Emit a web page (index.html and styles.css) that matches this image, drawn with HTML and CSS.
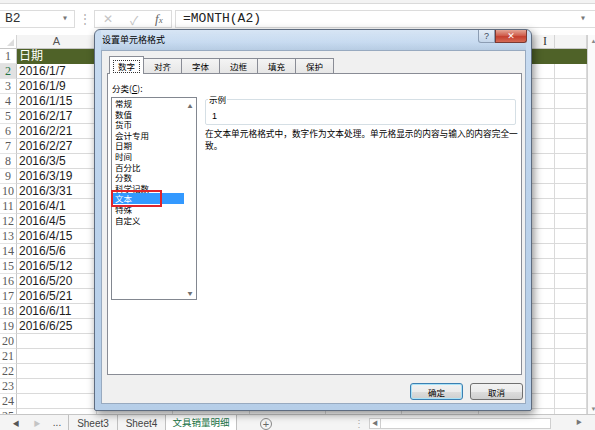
FILE: index.html
```html
<!DOCTYPE html>
<html lang="zh-CN">
<head>
    <meta charset="UTF-8">
    <meta name="viewport" content="width=device-width, initial-scale=1.0">
    <title>设置单元格格式</title>
    <link rel="stylesheet" href="styles.css">
</head>
<body>
    <div class="ribbon-edge"></div>

    <div class="formula-bar">
        <div class="name-box">B2<span class="caret">▾</span></div>
        <div class="grip">⋮</div>
        <div class="fx-box">
            <span class="fx-cancel">✕</span>
            <span class="fx-enter">✓</span>
            <span class="fx-label">f<small>x</small></span>
        </div>
        <div class="formula">=MONTH(A2)<span class="caret">▾</span></div>
    </div>

    <div class="sheet">
        <div class="grid">
            <div class="col-head">
                <span class="corner"><i></i></span><span>A</span><span></span><span></span><span></span><span></span><span></span><span class="beam">I</span><span></span>
            </div>
            <div class="row head"><span class="rh">1</span><span>日期</span><span></span><span></span><span></span><span></span><span></span><span></span><span></span></div>
            <div class="row current"><span class="rh">2</span><span>2016/1/7</span><span></span><span></span><span></span><span></span><span></span><span></span><span></span></div>
            <div class="row"><span class="rh">3</span><span>2016/1/9</span><span></span><span></span><span></span><span></span><span></span><span></span><span></span></div>
            <div class="row"><span class="rh">4</span><span>2016/1/15</span><span></span><span></span><span></span><span></span><span></span><span></span><span></span></div>
            <div class="row"><span class="rh">5</span><span>2016/2/17</span><span></span><span></span><span></span><span></span><span></span><span></span><span></span></div>
            <div class="row"><span class="rh">6</span><span>2016/2/21</span><span></span><span></span><span></span><span></span><span></span><span></span><span></span></div>
            <div class="row"><span class="rh">7</span><span>2016/2/27</span><span></span><span></span><span></span><span></span><span></span><span></span><span></span></div>
            <div class="row"><span class="rh">8</span><span>2016/3/5</span><span></span><span></span><span></span><span></span><span></span><span></span><span></span></div>
            <div class="row"><span class="rh">9</span><span>2016/3/19</span><span></span><span></span><span></span><span></span><span></span><span></span><span></span></div>
            <div class="row"><span class="rh">10</span><span>2016/3/31</span><span></span><span></span><span></span><span></span><span></span><span></span><span></span></div>
            <div class="row"><span class="rh">11</span><span>2016/4/1</span><span></span><span></span><span></span><span></span><span></span><span></span><span></span></div>
            <div class="row"><span class="rh">12</span><span>2016/4/5</span><span></span><span></span><span></span><span></span><span></span><span></span><span></span></div>
            <div class="row"><span class="rh">13</span><span>2016/4/15</span><span></span><span></span><span></span><span></span><span></span><span></span><span></span></div>
            <div class="row"><span class="rh">14</span><span>2016/5/6</span><span></span><span></span><span></span><span></span><span></span><span></span><span></span></div>
            <div class="row"><span class="rh">15</span><span>2016/5/12</span><span></span><span></span><span></span><span></span><span></span><span></span><span></span></div>
            <div class="row"><span class="rh">16</span><span>2016/5/20</span><span></span><span></span><span></span><span></span><span></span><span></span><span></span></div>
            <div class="row"><span class="rh">17</span><span>2016/5/21</span><span></span><span></span><span></span><span></span><span></span><span></span><span></span></div>
            <div class="row"><span class="rh">18</span><span>2016/6/11</span><span></span><span></span><span></span><span></span><span></span><span></span><span></span></div>
            <div class="row"><span class="rh">19</span><span>2016/6/25</span><span></span><span></span><span></span><span></span><span></span><span></span><span></span></div>
            <div class="row"><span class="rh">20</span><span></span><span></span><span></span><span></span><span></span><span></span><span></span><span></span></div>
            <div class="row"><span class="rh">21</span><span></span><span></span><span></span><span></span><span></span><span></span><span></span><span></span></div>
            <div class="row"><span class="rh">22</span><span></span><span></span><span></span><span></span><span></span><span></span><span></span><span></span></div>
            <div class="row"><span class="rh">23</span><span></span><span></span><span></span><span></span><span></span><span></span><span></span><span></span></div>
            <div class="row"><span class="rh">24</span><span></span><span></span><span></span><span></span><span></span><span></span><span></span><span></span></div>
            <div class="row"><span class="rh">25</span><span></span><span></span><span></span><span></span><span></span><span></span><span></span><span></span></div>
        </div>
        <div class="vscroll">
            <span class="arrow">▲</span>
            <span class="arrow">▼</span>
        </div>
    </div>

    <div class="tabbar">
        <span class="nav prev">◀</span>
        <span class="nav next">▶</span>
        <span class="nav more">...</span>
        <span class="sheet-tab">Sheet3</span>
        <span class="sheet-tab">Sheet4</span>
        <span class="sheet-tab active">文具销量明细</span>
        <span class="add-sheet">+</span>
        <span class="hgrip">⋮</span>
        <div class="hscroll">
            <span class="hbtn">◀</span>
            <span class="htrack"></span>
            <span class="hbtn right">▶</span>
        </div>
    </div>

    <!-- 设置单元格格式 dialog -->
    <div class="dialog">
        <div class="dlg-title">
            <span>设置单元格格式</span>
            <div class="dlg-controls">
                <span class="btn-help">?</span>
                <span class="btn-close">✕</span>
            </div>
        </div>
        <div class="dlg-client">
            <div class="tabs">
                <span class="tab active"><span class="focus">数字</span></span>
                <span class="tab">对齐</span>
                <span class="tab">字体</span>
                <span class="tab">边框</span>
                <span class="tab">填充</span>
                <span class="tab">保护</span>
            </div>
            <div class="panel">
                <div class="panel-left">
                    <div class="label">分类(<u>C</u>):</div>
                    <div class="listbox">
                        <ul>
                            <li>常规</li>
                            <li>数值</li>
                            <li>货币</li>
                            <li>会计专用</li>
                            <li>日期</li>
                            <li>时间</li>
                            <li>百分比</li>
                            <li>分数</li>
                            <li>科学记数</li>
                            <li class="selected">文本</li>
                            <li>特殊</li>
                            <li>自定义</li>
                        </ul>
                        <div class="list-scroll">
                            <span>▲</span>
                            <span>▼</span>
                        </div>
                        <div class="mark"></div>
                    </div>
                </div>
                <div class="panel-right">
                    <fieldset class="sample">
                        <legend>示例</legend>
                        <div class="sample-value">1</div>
                    </fieldset>
                    <p class="desc">在文本单元格格式中，数字作为文本处理。单元格显示的内容与输入的内容完全一致。</p>
                </div>
            </div>
            <div class="dlg-buttons">
                <button class="btn primary">确定</button>
                <button class="btn">取消</button>
            </div>
        </div>
    </div>
</body>
</html>
```

FILE: styles.css
```css
* {
    box-sizing: border-box;
}

body {
    margin: 0;
    width: 595px;
    height: 430px;
    overflow: hidden;
    position: relative;
    background-color: #fff;
    font-family: 'Liberation Sans', 'Noto Sans CJK SC', sans-serif;
    color: #1c1c1c;
}

/* top: ribbon edge + formula bar */
.ribbon-edge {
    height: 4px;
    background-color: #f3f3f3;
    border-bottom: 1px solid #dadada;
}

.formula-bar {
    height: 29px;
    display: flex;
    align-items: flex-start;
    padding-top: 6px;
}

.name-box {
    width: 75px;
    height: 18px;
    border: 1px solid #dcdcdc;
    border-left: none;
    padding-left: 5px;
    font-family: 'Liberation Mono', monospace;
    font-size: 13px;
    line-height: 16px;
    color: #333;
    position: relative;
}

.caret {
    position: absolute;
    right: 6px;
    top: 0;
    font-size: 10px;
    color: #777;
}

.grip {
    width: 19px;
    text-align: center;
    font-size: 12px;
    line-height: 18px;
    color: #b0b0b0;
}

.fx-box {
    width: 78px;
    height: 18px;
    border: 1px solid #dcdcdc;
    display: flex;
    justify-content: space-around;
    align-items: center;
    font-size: 12px;
}

.fx-cancel, .fx-enter {
    color: #c4c4c4;
}

.fx-label {
    font-family: 'Liberation Serif', serif;
    font-style: italic;
    color: #666;
    font-size: 13px;
}

.fx-label small {
    font-size: 9px;
}

.formula {
    flex: 1;
    margin-left: 3px;
    height: 18px;
    border: 1px solid #dcdcdc;
    border-right: none;
    padding-left: 7px;
    font-family: 'Liberation Mono', monospace;
    font-size: 13px;
    line-height: 16px;
    color: #222;
    position: relative;
}

.formula .caret {
    right: 9px;
}

/* sheet grid */
.sheet {
    display: flex;
    height: 379px;
    margin-top: 2px;
}

.grid {
    width: 587px;
    flex: 0 0 587px;
    overflow: hidden;
}

.col-head, .row {
    display: grid;
    grid-template-columns: 17px 80px repeat(6, 1fr) 32px;
}

.col-head {
    height: 14px;
    background-color: #f4f4f4;
}

.col-head span {
    border-right: 1px solid #d4d4d4;
    border-bottom: 1px solid #c6c6c6;
    text-align: center;
    font-size: 11px;
    line-height: 13px;
    color: #555;
}

.col-head .corner {
    position: relative;
    background-color: #fff;
}

.col-head .corner i {
    position: absolute;
    right: 2px;
    bottom: 2px;
    border-left: 7px solid transparent;
    border-bottom: 7px solid #dcdcdc;
}

.col-head .beam {
    text-align: right;
    padding-right: 7px;
    font-family: 'Liberation Serif', serif;
    font-size: 12px;
    color: #333;
}

.row {
    height: 15px;
}

.row span {
    border-right: 1px solid #dadada;
    border-bottom: 1px solid #dadada;
    padding-left: 2px;
    font-size: 12px;
    line-height: 14px;
    white-space: nowrap;
    overflow: hidden;
}

.row .rh {
    padding-left: 0;
    text-align: center;
    font-family: 'Liberation Serif', serif;
    color: #5a5a5a;
    background-color: #fff;
    border-right-color: #c6c6c6;
    border-bottom-color: #e4e4e4;
}

.row.current .rh {
    background-color: #e1e1e1;
    color: #217346;
}

.row.head span:not(.rh) {
    background-color: #4f6228;
    border-color: #4f6228;
    color: #fff;
}

.vscroll {
    width: 12px;
    flex: 0 0 12px;
    border-left: 1px solid #d0d0d0;
    background-color: #fafafa;
    display: flex;
    flex-direction: column;
    justify-content: space-between;
    align-items: center;
    padding: 3px 0 2px;
}

.vscroll .arrow {
    font-size: 6px;
    color: #888;
}

/* sheet tabs */
.tabbar {
    height: 18px;
    display: flex;
    align-items: stretch;
    background-color: #f4f4f4;
    border-top: 1px solid #c6c6c6;
    padding-left: 10px;
    font-size: 10px;
    line-height: 17px;
}

.nav {
    width: 12px;
    text-align: center;
    font-size: 7px;
    color: #555;
}

.nav.next {
    margin-left: 9px;
    color: #c4c4c4;
}

.nav.more {
    margin-left: 8px;
    margin-right: 5px;
    font-size: 10px;
    line-height: 15px;
    color: #444;
}

.sheet-tab {
    width: 49px;
    text-align: center;
    border-left: 1px solid #c0c0c0;
    color: #444;
}

.sheet-tab:nth-of-type(5) {
    width: 48px;
}

.sheet-tab.active {
    width: 72px;
    background-color: #fff;
    color: #217346;
    border-right: 1px solid #c0c0c0;
    border-bottom: 2px solid #217346;
    line-height: 15px;
    font-size: 9.5px;
}

.add-sheet {
    margin-left: 23px;
    margin-top: 3px;
    width: 12px;
    height: 12px;
    border: 1px solid #8a8a8a;
    border-radius: 50%;
    text-align: center;
    font-size: 11px;
    line-height: 10px;
    color: #666;
}

.hgrip {
    margin-left: 82px;
    width: 10px;
    text-align: center;
    color: #aaa;
}

.hscroll {
    margin-left: 5px;
    display: flex;
    align-items: center;
}

.hbtn {
    width: 12px;
    height: 11px;
    border: 1px solid #cfcfcf;
    background-color: #fff;
    font-size: 6px;
    line-height: 9px;
    text-align: center;
    color: #777;
}

.hbtn.right {
    margin-left: 23px;
    width: 10px;
    border: none;
    background: none;
}

.htrack {
    width: 170px;
    height: 11px;
    border: 1px solid #cfcfcf;
    border-left: none;
    background-color: #fff;
}

/* dialog */
.dialog {
    position: absolute;
    left: 94px;
    top: 29px;
    width: 438px;
    height: 382px;
    border: 1px solid #5e6c80;
    border-radius: 6px 6px 2px 2px;
    padding: 0 5px 6px 6px;
    background: linear-gradient(to bottom, #c9dcf1, #bcd3ec 40%, #b6cee8);
    box-shadow: 2px 3px 9px rgba(0, 0, 0, 0.45);
    display: flex;
    flex-direction: column;
    font-family: 'Noto Sans CJK SC', 'Liberation Sans', sans-serif;
    color: #000;
}

.dlg-title {
    height: 20px;
    position: relative;
    padding-left: 1px;
    font-size: 9px;
    line-height: 20px;
    background: linear-gradient(to bottom, rgba(255, 255, 255, 0.25), rgba(255, 255, 255, 0) 60%, rgba(90, 120, 150, 0.15));
}

.dlg-controls {
    position: absolute;
    top: 0;
    right: -1px;
    display: flex;
}

.btn-help {
    width: 17px;
    height: 13px;
    border: 1px solid #8c9db3;
    border-top: none;
    border-radius: 0 0 0 3px;
    background: linear-gradient(to bottom, #e4edf7, #c5d6ea);
    text-align: center;
    font-family: 'Liberation Sans', sans-serif;
    font-size: 9px;
    line-height: 12px;
    color: #3c4a5c;
}

.btn-close {
    width: 32px;
    height: 13px;
    border: 1px solid #7a3a33;
    border-top: none;
    border-radius: 0 0 3px 0;
    background: linear-gradient(to bottom, #e4a595, #d0604f 45%, #c5402f 55%, #d56a55);
    text-align: center;
    font-family: 'DejaVu Sans', sans-serif;
    font-size: 9px;
    font-weight: bold;
    line-height: 12px;
    color: #fff;
}

.dlg-client {
    flex: 1;
    background-color: #f0f0f0;
    border: 1px solid #98aac0;
    padding-top: 5px;
}

.tabs {
    height: 18px;
    display: flex;
    align-items: flex-end;
    padding-left: 7px;
    position: relative;
    z-index: 1;
    font-size: 8.5px;
}

.tab {
    width: 38px;
    height: 15px;
    margin-bottom: 1px;
    border: 1px solid #898c95;
    border-left: none;
    border-bottom: none;
    background: linear-gradient(to bottom, #f4f4f4, #e6e6e6);
    text-align: center;
    line-height: 14px;
}

.tab.active {
    width: 35px;
    height: 18px;
    margin-bottom: 0;
    border-left: 1px solid #898c95;
    background: #fff;
    padding: 3px 3px 0;
    line-height: 11px;
}

.tab .focus {
    display: block;
    border: 1px dotted #333;
    height: 13px;
}

.panel {
    margin: -1px 0 0 5px;
    width: 415px;
    height: 302px;
    border: 1px solid #898c95;
    background-color: #fff;
    padding: 9px 0 0 3px;
    display: flex;
    font-size: 8.5px;
}

.panel-left {
    width: 86px;
}

.label {
    height: 11px;
    line-height: 11px;
    padding-left: 1px;
}

.listbox {
    margin-top: 3px;
    height: 203px;
    border: 1px solid #828790;
    position: relative;
    display: flex;
}

.listbox ul {
    list-style: none;
    margin: 0;
    padding: 0;
    flex: 1;
}

.listbox li {
    height: 10.6px;
    line-height: 10.6px;
    padding-left: 3px;
}

.listbox li.selected {
    background-color: #3399ff;
    color: #fff;
}

.list-scroll {
    width: 12px;
    display: flex;
    flex-direction: column;
    justify-content: space-between;
    align-items: center;
    padding: 4px 0 3px;
    font-size: 5px;
    color: #707070;
}

.listbox .mark {
    position: absolute;
    left: -1px;
    top: 92px;
    width: 51px;
    height: 17px;
    border: 2px solid #e0252b;
}

.panel-right {
    margin-left: 8px;
    width: 316px;
    padding-top: 11px;
}

.sample {
    margin: 0 5px 0 0;
    padding: 5px 6px 2px;
    border: 1px solid #d5dfe5;
    border-radius: 2px;
}

.sample legend {
    margin-left: -4px;
    padding: 0 1px;
    line-height: 11px;
}

.sample-value {
    height: 12px;
    line-height: 12px;
    font-family: 'Liberation Sans', sans-serif;
    font-size: 9px;
}

.desc {
    margin: 3px 0 0;
    width: 318px;
    font-size: 8.7px;
    line-height: 12px;
}

.dlg-buttons {
    display: flex;
    justify-content: flex-end;
    gap: 7px;
    margin-top: 8px;
    padding-right: 2px;
}

.btn {
    width: 53px;
    height: 17px;
    border: 1px solid #707070;
    border-radius: 3px;
    background: linear-gradient(to bottom, #f2f2f2, #ebebeb 50%, #dddddd 51%, #cfcfcf);
    font-family: 'Noto Sans CJK SC', sans-serif;
    font-size: 8.5px;
    padding: 0;
    color: #000;
}

.btn.primary {
    border-color: #3c7fb1;
    box-shadow: inset 0 0 0 1px #a9e2f8;
}
```
